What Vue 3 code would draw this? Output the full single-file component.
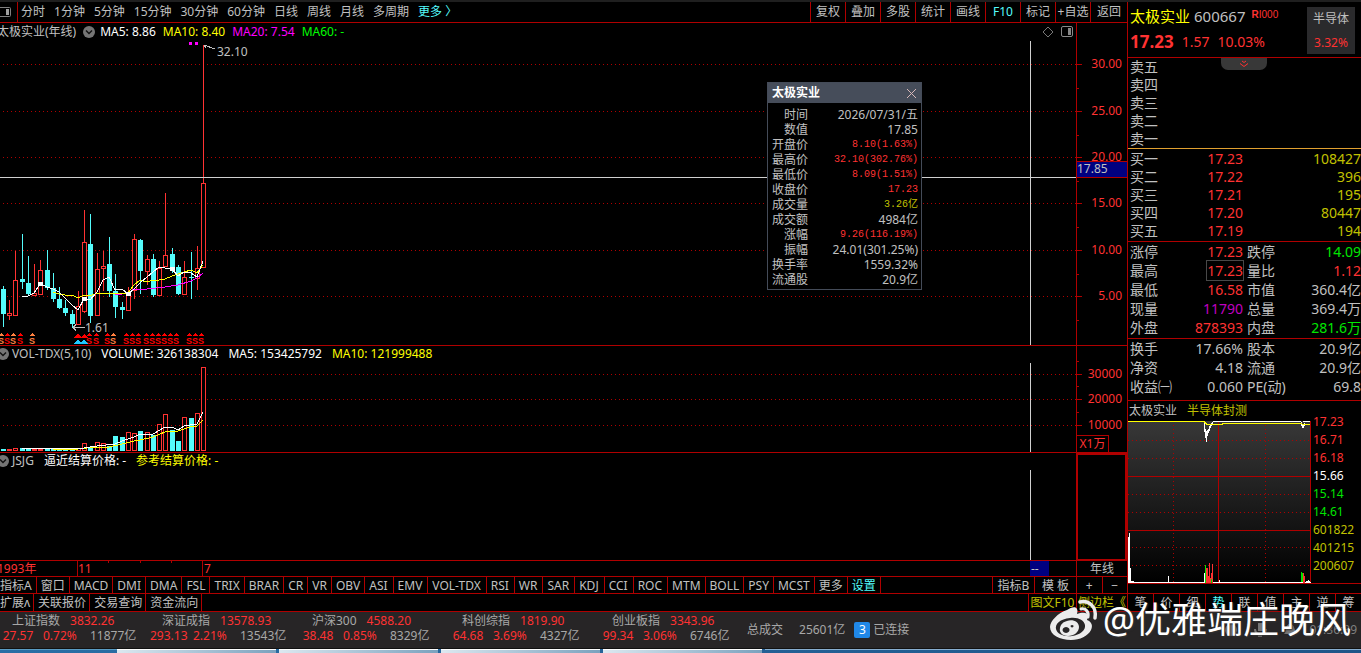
<template>
  <div class="app">
    <div class="workspace">
      <main class="left">
        <nav class="toolbar">
          <button class="panel-toggle" aria-label="panel">
            <svg width="12" height="12" viewBox="0 0 12 12">
              <rect x="-3" y="1.5" width="13.5" height="9" rx="1" fill="none" stroke="#808080" />
              <rect x="6" y="3" width="3" height="6" fill="#a0a0a0" />
            </svg>
          </button>
          <div class="periods">
            <button v-for="p in periods" :key="p">{{ p }}</button>
            <button class="cyan">更多 〉</button>
          </div>
          <div class="tools">
            <button v-for="t in tools" :key="t" :class="{ cyan: t === 'F10' }">{{ t }}</button>
          </div>
        </nav>

        <section class="pane pane-main">
          <div class="plot-col">
            <div class="pane-head">
              <span class="title">太极实业(年线)</span>
              <svg class="drop" width="12" height="12" viewBox="0 0 12 12">
                <circle cx="6" cy="6" r="6" fill="#757575" />
                <path d="M3 4.5 6 7.5 9 4.5" fill="none" stroke="#111" stroke-width="1.4" />
              </svg>
              <span class="white">MA5: 8.86</span>
              <span class="yellow">MA10: 8.40</span>
              <span class="magenta">MA20: 7.54</span>
              <span class="lime">MA60: -</span>
              <svg class="head-icons" width="32" height="12" viewBox="0 0 32 12">
                <path d="M6 1 11 6 6 11 1 6Z" fill="none" stroke="#777" />
                <rect x="19.5" y=".5" width="11" height="10" rx="1.5" fill="none" stroke="#888" />
                <rect x="26" y="2" width="3" height="7" fill="#888" />
              </svg>
            </div>
            <div class="plot">
              <svg class="canvas" height="304">
                <line v-for="y in priceGrid" :key="y" class="dots" x1="3" :y1="y + 0.5" x2="100%" :y2="y + 0.5" />
                <g v-for="(c, i) in candles" :key="i">
                  <line :x1="c[0] + 0.5" :x2="c[0] + 0.5" :y1="c[1]" :y2="c[4]" :stroke="c[5] ? RED : CYAN" />
                  <rect
                    v-if="c[5]"
                    :x="c[0] - 1.5"
                    :y="c[2] + 0.5"
                    width="4"
                    :height="Math.max(1, c[3] - c[2])"
                    fill="#000"
                    :stroke="RED"
                  />
                  <rect v-else :x="c[0] - 2" :y="c[2]" width="5" :height="c[3] - c[2]" :fill="CYAN" />
                </g>
                <polyline :points="ma20" stroke="#f0f" />
                <polyline :points="ma10" stroke="#ff0" />
                <polyline :points="ma5" stroke="#fff" />
                <rect v-for="m in marks" :key="m[0]" :x="m[0] - 2" :y="m[1] - 2" width="5" height="4" fill="#fff" />
                <rect x="189" y="1" width="3" height="3" fill="#f0f" />
                <rect x="195" y="1" width="3" height="3" fill="#f0f" />
                <path d="M204 4 215 8M204 4h3M204 4l2 3" fill="none" stroke="#c0c0c0" />
                <text x="217" y="15" fill="#c0c0c0">32.10</text>
                <path d="M73 286.500h12M73 286.500l3-3M73 286.500l3 3" fill="none" stroke="#c0c0c0" />
                <text x="85" y="291" fill="#c0c0c0">1.61</text>
                <g v-for="s in signals" :key="s[0]" :fill="s[1]">
                  <path :d="`M${s[0]} 292l3 3h-6z`" />
                  <text class="signal" :x="s[0]" y="303" text-anchor="middle">S</text>
                </g>
                <path d="M78 298l4 5h-8zM84 298l4 5h-8z" fill="#1ec8ff" />
                <path d="M78 292l4 5h-8zM84 293l4 4h-8z" fill="#f00" />
                <line x1="0" y1="136.5" x2="100%" y2="136.5" stroke="#d0d0d0" />
              </svg>
              <div class="cross-v"></div>
              <div class="popup">
                <div class="popup-title">
                  <strong>太极实业</strong>
                  <button aria-label="close">
                    <svg width="11" height="11" viewBox="0 0 11 11">
                      <path d="M1 1 10 10M10 1 1 10" stroke="#d8b8b8" />
                    </svg>
                  </button>
                </div>
                <table>
                  <tbody>
                    <tr v-for="r in quote" :key="r[0]">
                      <th>{{ r[0] }}</th>
                      <td :class="r[2]">{{ r[1] }}</td>
                    </tr>
                  </tbody>
                </table>
              </div>
            </div>
          </div>
          <div class="axis">
            <svg width="50" height="322">
              <g v-for="(y, i) in priceGrid" :key="y">
                <path :d="`M0 ${y + 18.5}h5M0 ${y + 42.5}h2`" stroke="#b00000" />
                <text x="45" :y="y + 22" text-anchor="end" fill="#ff3232">{{ 30 - i * 5 }}.00</text>
              </g>
            </svg>
            <div class="cursor-price">17.85</div>
          </div>
        </section>

        <section class="pane">
          <div class="plot-col">
            <div class="pane-head clip-left">
              <svg class="drop" width="12" height="12" viewBox="0 0 12 12">
                <circle cx="6" cy="6" r="6" fill="#757575" />
                <path d="M3 4.5 6 7.5 9 4.5" fill="none" stroke="#111" stroke-width="1.4" />
              </svg>
              <span>VOL-TDX(5,10)</span>
              <span class="white">VOLUME: 326138304</span>
              <span class="white">MA5: 153425792</span>
              <span class="yellow">MA10: 121999488</span>
            </div>
            <div class="plot">
              <svg class="canvas" height="89">
                <line v-for="y in volGrid" :key="y" class="dots" x1="3" :y1="y + 0.5" x2="100%" :y2="y + 0.5" />
                <g v-for="(c, i) in candles" :key="i">
                  <rect
                    v-if="c[5]"
                    :x="c[0] - 1.5"
                    :y="88.5 - volumes[i]"
                    width="4"
                    :height="volumes[i] - 1"
                    fill="#000"
                    :stroke="RED"
                  />
                  <rect v-else :x="c[0] - 2" :y="88 - volumes[i]" width="5" :height="volumes[i]" :fill="CYAN" />
                </g>
                <polyline :points="volMa10" stroke="#ff0" />
                <polyline :points="volMa5" stroke="#fff" />
              </svg>
              <div class="cross-v"></div>
            </div>
          </div>
          <div class="axis">
            <svg width="50" height="106">
              <g v-for="(y, i) in volGrid" :key="y">
                <path :d="`M0 ${y + 17.5}h5M0 ${y + 4.5}h2`" stroke="#b00000" />
                <text x="45" :y="y + 21" text-anchor="end" fill="#ff3232">{{ 30000 - i * 10000 }}</text>
              </g>
            </svg>
            <div class="unit">X1万</div>
          </div>
        </section>

        <section class="pane pane-last">
          <div class="plot-col">
            <div class="pane-head clip-left">
              <svg class="drop" width="12" height="12" viewBox="0 0 12 12">
                <circle cx="6" cy="6" r="6" fill="#757575" />
                <path d="M3 4.5 6 7.5 9 4.5" fill="none" stroke="#111" stroke-width="1.4" />
              </svg>
              <span>JSJG</span>
              <span class="white">逼近结算价格: -</span>
              <span class="yellow">参考结算价格: -</span>
            </div>
            <div class="plot">
              <div class="cross-v"></div>
            </div>
          </div>
          <div class="axis framed"></div>
        </section>

        <div class="time-axis">
          <div class="times">
            <svg class="canvas" height="15">
              <path d="M77.5 0v15M202.5 0v15M108.5 0v2M140.5 0v2M171.5 0v2" stroke="#b00000" />
              <g fill="#ff3232">
                <text x="-3" y="12">1993年</text>
                <text x="78" y="12">11</text>
                <text x="204" y="12">7</text>
              </g>
            </svg>
            <span class="cursor-time">--</span>
          </div>
          <button class="cycle">年线</button>
        </div>

        <div class="strip indicators">
          <div class="cells clip-left">
            <button v-for="n in indicators" :key="n" :class="{ cyan: n === '设置' }">{{ n }}</button>
          </div>
          <div class="cells lead">
            <button class="w42">指标B</button>
            <button class="w42">模 板</button>
          </div>
          <div class="zoomers">
            <button>+</button>
            <button>−</button>
          </div>
        </div>

        <div class="strip links">
          <div class="cells clip-left">
            <button v-for="n in links" :key="n">{{ n }}</button>
          </div>
          <div class="cells lead olive">
            <button class="w48">图文F10</button>
          </div>
          <div class="zoomers olive">
            <button>侧边栏《</button>
          </div>
        </div>
      </main>

      <aside class="side">
        <header class="stock">
          <div>
            <div class="stock-name">
              <span class="yellow">太极实业</span>
              <span>600667</span>
              <small><b>R</b>I000</small>
            </div>
            <div class="stock-price"><b>17.23</b><span>1.57</span><span>10.03%</span></div>
          </div>
          <div class="sector">
            <span>半导体</span>
            <span class="red">3.32%</span>
          </div>
          <button class="pull" aria-label="expand">
            <svg width="12" height="8" viewBox="0 0 12 8">
              <path d="M4 1 6 2.5 8 1M2 3.5 6 6.5 10 3.5" fill="none" stroke="#ff3232" />
            </svg>
          </button>
        </header>

        <table class="book asks">
          <tbody>
            <tr v-for="n in ['五', '四', '三', '二', '一']" :key="n">
              <th>卖{{ n }}</th>
              <td></td>
              <td></td>
            </tr>
          </tbody>
        </table>
        <table class="book bids">
          <tbody>
            <tr v-for="b in bids" :key="b[0]">
              <th>{{ b[0] }}</th>
              <td class="red">{{ b[1] }}</td>
              <td class="olive">{{ b[2] }}</td>
            </tr>
          </tbody>
        </table>
        <table v-for="(group, g) in stats" :key="g" class="stats">
          <tbody>
            <tr v-for="s in group" :key="s[0]">
              <th>{{ s[0] }}</th>
              <td :class="s[2]"><span :class="{ boxed: s[0] === '最高' }">{{ s[1] }}</span></td>
              <th>{{ s[3] }}</th>
              <td :class="s[5]">{{ s[4] }}</td>
            </tr>
          </tbody>
        </table>

        <section class="mini">
          <div class="mini-chart">
            <div class="mini-head"><span>太极实业</span><span class="olive">半导体封测</span></div>
            <svg width="183" height="162">
              <defs>
                <linearGradient id="shade" x1="0" y1="0" x2="0" y2="1">
                  <stop offset="0" stop-color="#383838" />
                  <stop offset="1" stop-color="#000" />
                </linearGradient>
              </defs>
              <rect width="183" height="162" fill="url(#shade)" />
              <path class="mini-dots" d="M0 19.5h182M0 37.5h182M0 73.5h182M0 91.5h182M0 126.5h182M0 144.5h182M45.5 0v162M137.5 0v162" />
              <path d="M0 55.5h182M0 109.5h182M90.5 0v162M182.5 0v162" stroke="#b00000" />
              <path d="M0 .5h77M85 .5h88M175 .5h7" stroke="#fff" />
              <path
                d="M76.5 0v11M77.5 8v9M78.5 10v11M79.5 9v6M80.5 8v4M81.5 5v5M82.5 4v3M83.5 2v3M84.5 1v2M173.5 1v4M174.5 3v4M175.5 4v3M176.5 2v3"
                stroke="#fff"
              />
              <polyline points="0,0.5 76,0.5 79,3.5 94,3.5 94,2.5 172,2.5 176,3.5 182,3.5" stroke="#ff0" />
              <path d="M0 161.5h183M40.5 155v6M91.5 159v2M76.5 152v9" stroke="#fff" />
              <path d="M0 162V116h1V112h1V147h1V160h3V162z" fill="#fff" />
              <path d="M78 162v-15h2v8h1v-13h1v15h1v-5h1v-9h1v19zM175 162v-10h1v3h1v7z" fill="#ff3232" />
              <path d="M77.5 162v-18M83.5 162v-4M173.5 161v-10M174.5 161v-9" stroke="#00e600" />
              <path d="M178 160.5h4M180.5 159v2" stroke="#fff" />
            </svg>
          </div>
          <div class="mini-labels">
            <span v-for="l in miniLabels" :key="l[0]" :class="l[1]">{{ l[0] }}</span>
          </div>
        </section>
        <div class="side-tabs">
          <button v-for="t in sideTabs" :key="t" :class="{ cyan: t === '势' }">{{ t }}</button>
        </div>
      </aside>
    </div>

    <footer class="status">
      <div v-for="i in indices" :key="i[0]" class="index">
        <div class="index-top"><span>{{ i[0] }}</span><span class="red">{{ i[1] }}</span></div>
        <div class="index-bottom">
          <span class="red">{{ i[2] }}</span><span class="red">{{ i[3] }}</span><span>{{ i[4] }}</span>
        </div>
      </div>
      <span class="total">总成交</span>
      <span class="amount">25601亿</span>
      <span class="badge">3</span>
      <span>已连接</span>
      <svg class="tray" width="80" height="18" viewBox="0 0 80 18" fill="#777">
        <circle cx="10" cy="9" r="6" />
        <path d="M37 2h5v8h-5zM33 8h2c0 6 9 6 9 0h2c0 4-2 5-5 6v2h-4v-2c-3-1-4-3-4-6z" />
        <path d="M63 13c3-3 1-10 6-10s4 7 7 10z" />
      </svg>
      <span class="clock">01:36:39</span>
    </footer>
    <div class="taskbar">
      <i class="start"></i>
      <i v-for="n in 4" :key="n" class="task"></i>
      <i class="desk"></i>
    </div>

    <div class="watermark">
      <svg width="50" height="44" viewBox="0 0 50 44">
        <path
          fill="#ececec"
          fill-rule="evenodd"
          d="M18 12c4-3 9-4 10-1 1 2 0 4 0 5 5-2 11-2 11 2 0 2-1 3-1 4 5 2 6 6 4 10-3 6-11 10-20 10C11 42 1 37 1 29c0-6 8-14 17-17zM21 20C11 21 6 26 7 31c1 5 8 8 16 7s14-6 13-11-7-8-15-7z"
        />
        <path fill="#ececec" fill-rule="evenodd" d="M18 23c6-2 12 1 12 6s-5 9-11 9-9-4-8-8 3-6 7-7zm-1 6a3.5 3 0 1 0 .1 0zM23 27a1.5 1.2 0 1 0 .1 0z" />
        <path d="M32 11c5-1 8 3 7 8" fill="none" stroke="#ececec" stroke-width="3" stroke-linecap="round" />
        <path d="M31 4c9-2 17 5 15 16" fill="none" stroke="#ececec" stroke-width="3.5" stroke-linecap="round" />
      </svg>
      <span>@优雅端庄晚风</span>
    </div>
  </div>
</template>

<script setup>
const RED = "#ff3232";
const CYAN = "#54fcfc";

const periods = ["分时", "1分钟", "5分钟", "15分钟", "30分钟", "60分钟", "日线", "周线", "月线", "多周期"];
const tools = ["复权", "叠加", "多股", "统计", "画线", "F10", "标记", "+自选", "返回"];
const indicators = [
  "指标A", "窗口", "MACD", "DMI", "DMA", "FSL", "TRIX", "BRAR", "CR", "VR", "OBV", "ASI", "EMV",
  "VOL-TDX", "RSI", "WR", "SAR", "KDJ", "CCI", "ROC", "MTM", "BOLL", "PSY", "MCST", "更多", "设置",
];
const links = ["扩展ʌ", "关联报价", "交易查询", "资金流向"];
const sideTabs = ["笔", "价", "细", "势", "联", "值", "主", "逆", "筹"];

const priceGrid = [23, 70, 116, 162, 209, 255];
const volGrid = [11, 36, 62];

// x, high, body top, body bottom, low, rising
const candles = [
  [3, 245, 248, 273, 286, 0],
  [9, 259, 272, 274, 279, 1],
  [15, 210, 239, 274, 275, 1],
  [22, 193, 238, 241, 248, 0],
  [28, 215, 242, 253, 255, 0],
  [34, 223, 252, 254, 255, 1],
  [40, 219, 229, 253, 254, 1],
  [47, 209, 229, 247, 249, 0],
  [53, 232, 247, 258, 261, 0],
  [59, 246, 258, 267, 268, 0],
  [65, 259, 267, 272, 275, 0],
  [72, 269, 273, 283, 287, 0],
  [78, 250, 265, 283, 284, 1],
  [84, 169, 201, 270, 272, 1],
  [90, 173, 203, 275, 282, 0],
  [97, 212, 228, 274, 275, 1],
  [103, 210, 225, 227, 250, 1],
  [109, 196, 223, 250, 256, 0],
  [115, 233, 250, 266, 277, 0],
  [122, 261, 266, 269, 278, 0],
  [128, 246, 253, 269, 270, 1],
  [134, 193, 198, 249, 258, 1],
  [140, 198, 199, 230, 253, 0],
  [147, 214, 218, 230, 244, 1],
  [153, 213, 218, 254, 256, 0],
  [159, 220, 227, 254, 255, 1],
  [165, 152, 214, 225, 226, 1],
  [172, 207, 213, 229, 232, 0],
  [178, 224, 226, 253, 254, 0],
  [184, 220, 236, 253, 254, 1],
  [191, 211, 236, 237, 258, 0],
  [197, 205, 227, 237, 249, 1],
  [203, 4, 142, 226, 227, 1],
];
const volumes = [
  2, 2, 3, 3, 3, 2, 2, 2, 2, 1, 2, 1, 3, 8, 4, 9, 8, 5, 15, 14, 19, 18, 20, 19, 16, 27, 37, 21, 10,
  34, 33, 38, 84,
];

const ma5 =
  "22,255 28,255 34,252 40,243 47,246 53,248 59,251 65,257 72,264 78,269 84,258 90,259 97,251 103,239 109,236 115,249 122,248 128,253 134,248 140,242 147,236 153,231 159,226 165,227 172,228 178,235 184,231 191,232 197,236 203,220";
const ma10 =
  "53,251 59,253 65,254 72,254 78,257 84,254 90,255 97,252 115,253 128,252 134,244 140,239 147,241 153,239 159,239 165,238 172,235 178,233 184,231 191,229 197,232 203,224";
const ma20 = "115,253 122,253 128,252 134,248 147,248 165,246 178,244 191,240 197,237 203,232";
const volMa5 =
  "22,86 40,85 84,85 97,83 115,81 122,78 134,74 140,71 153,71 165,64 172,64 178,67 184,63 197,61 203,49";
const volMa10 =
  "53,86 78,86 97,84 109,84 122,81 134,78 140,77 153,74 165,69 178,68 190,64 197,63 203,57";
const marks = [[40, 243], [84, 258], [128, 253], [172, 228]];

const orange = [1, 13, 32, 113];
const signals = [1, 7, 13, 20, 32, 89, 96, 107, 113, 126, 132, 138, 146, 152, 158, 164, 170, 176, 189, 195, 201]
  .map((x) => [x, orange.includes(x) ? "#ff8040" : "#ff0000"]);

const quote = [
  ["时间", "2026/07/31/五", ""],
  ["数值", "17.85", ""],
  ["开盘价", "8.10(1.63%)", "mono red"],
  ["最高价", "32.10(302.76%)", "mono red"],
  ["最低价", "8.09(1.51%)", "mono red"],
  ["收盘价", "17.23", "mono red"],
  ["成交量", "3.26亿", "mono olive"],
  ["成交额", "4984亿", ""],
  ["涨幅", "9.26(116.19%)", "mono red"],
  ["振幅", "24.01(301.25%)", ""],
  ["换手率", "1559.32%", ""],
  ["流通股", "20.9亿", ""],
];

const bids = [
  ["买一", "17.23", "108427"],
  ["买二", "17.22", "396"],
  ["买三", "17.21", "195"],
  ["买四", "17.20", "80447"],
  ["买五", "17.19", "194"],
];

const stats = [
  [
    ["涨停", "17.23", "red", "跌停", "14.09", "green"],
    ["最高", "17.23", "red", "量比", "1.12", "red"],
    ["最低", "16.58", "red", "市值", "360.4亿", ""],
    ["现量", "11790", "purple", "总量", "369.4万", ""],
    ["外盘", "878393", "red", "内盘", "281.6万", "green"],
  ],
  [
    ["换手", "17.66%", "", "股本", "20.9亿", ""],
    ["净资", "4.18", "", "流通", "20.9亿", ""],
    ["收益㈠", "0.060", "", "PE(动)", "69.8", ""],
  ],
];

const miniLabels = [
  ["17.23", "red"],
  ["16.71", "red"],
  ["16.18", "red"],
  ["15.66", "white"],
  ["15.14", "green"],
  ["14.61", "green"],
  ["601822", "olive"],
  ["401215", "olive"],
  ["200607", "olive"],
];

const indices = [
  ["上证指数", "3832.26", "27.57", "0.72%", "11877亿"],
  ["深证成指", "13578.93", "293.13", "2.21%", "13543亿"],
  ["沪深300", "4588.20", "38.48", "0.85%", "8329亿"],
  ["科创综指", "1819.90", "64.68", "3.69%", "4327亿"],
  ["创业板指", "3343.96", "99.34", "3.06%", "6746亿"],
];
</script>

<style>
body {
  background: #000;
}
</style>

<style scoped>
.app {
  position: relative;
  display: flex;
  flex-direction: column;
  min-height: 100vh;
  box-sizing: border-box;
  border-top: 2px solid #1f1f1f;
  overflow: hidden;
  background: #000;
  color: #c0c0c0;
  font: 12px/16px "Noto Sans", "Noto Sans CJK SC", sans-serif;
  white-space: nowrap;
}
button {
  margin: 0;
  padding: 0;
  border: 0;
  background: none;
  color: inherit;
  font: inherit;
  white-space: nowrap;
  cursor: pointer;
}
table {
  border-collapse: collapse;
}
th {
  font-weight: normal;
}
svg {
  display: block;
  flex: none;
}
.white { color: #fff; }
.yellow { color: #ff0; }
.magenta { color: #f0f; }
.lime { color: #0f0; }
.green { color: #00e600; }
.red { color: #ff3232; }
.cyan { color: #54fcfc; }
.olive { color: #c0c000; }
.purple { color: #c000c0; }

.workspace {
  flex: 1;
  display: flex;
}
.left {
  flex: 1;
  min-width: 0;
  display: flex;
  flex-direction: column;
}

.toolbar {
  display: flex;
  height: 20px;
  border-bottom: 1px solid #b00000;
}
.panel-toggle {
  width: 18px;
  border-right: 1px solid #b00000;
}
.periods {
  flex: 1;
  display: flex;
  gap: 9px;
  padding-left: 3px;
}
.tools {
  display: flex;
}
.tools button {
  width: 35px;
  border-left: 1px solid #b00000;
  overflow: hidden;
}
.tools button:last-child {
  width: 37px;
}

.pane {
  display: flex;
  border-bottom: 1px solid #b00000;
}
.pane-last {
  flex: 1;
}
.plot-col {
  flex: 1;
  min-width: 0;
  display: flex;
  flex-direction: column;
}
.pane-main .plot-col {
  padding-top: 1px;
}
.pane-head {
  display: flex;
  align-items: center;
  gap: 7px;
  height: 15px;
  padding-bottom: 2px;
}
.pane-head .title,
.clip-left {
  margin-left: -3px;
}
.pane-head .drop {
  margin-right: -2px;
}
.pane-head.clip-left {
  gap: 10px;
}
.clip-left .drop {
  margin-right: -7px;
}
.head-icons {
  margin-left: auto;
  margin-right: 2px;
}
.plot {
  position: relative;
  flex: 1;
}
.canvas {
  width: 100%;
  shape-rendering: crispEdges;
}
.canvas polyline,
.mini-chart polyline {
  fill: none;
}
.dots {
  stroke: #b00000;
  stroke-dasharray: 1 3;
}
.signal {
  font: bold 9px "Liberation Sans", sans-serif;
}
.cross-v {
  position: absolute;
  top: 0;
  bottom: 0;
  right: 45px;
  width: 1px;
  background: #d0d0d0;
}
.axis {
  position: relative;
  width: 50px;
  border-left: 1px solid #b00000;
}
.framed {
  width: 47px;
  border: 2px solid #b00000;
  border-bottom-width: 1px;
}
.cursor-price {
  position: absolute;
  top: 138px;
  left: 0;
  right: 0;
  border: solid #b00000;
  border-width: 1px 0;
  background: #000080;
  padding-bottom: 1px;
  line-height: 14px;
}
.unit {
  position: absolute;
  left: 0;
  bottom: 0;
  width: 31px;
  border: solid #b00000;
  border-width: 1px 1px 0 0;
  color: #ff3232;
  text-align: center;
}

.popup {
  position: absolute;
  left: 767px;
  top: 41px;
  width: 153px;
  border: 1px solid #444b58;
  background: #000;
}
.popup-title {
  display: flex;
  align-items: center;
  justify-content: space-between;
  height: 20px;
  padding: 0 4px;
  background: #464d5a;
  color: #fff;
}
.popup table {
  width: 100%;
  margin: 4px 0 2px;
}
.popup th,
.popup td {
  padding: 0;
  height: 15px;
  line-height: 15px;
  text-align: right;
}
.popup th {
  width: 40px;
}
.popup td {
  padding-right: 3px;
}
.popup .mono {
  font-family: "Liberation Mono", "Noto Sans CJK SC", monospace;
  font-size: 10px;
}

.time-axis,
.strip {
  display: flex;
  border-bottom: 1px solid #b00000;
}
.time-axis {
  height: 15px;
}
.times {
  position: relative;
  flex: 1;
}
.cursor-time {
  position: absolute;
  top: 0;
  right: 27px;
  width: 18px;
  padding-left: 1px;
  background: #000080;
  line-height: 15px;
}
.cycle,
.zoomers {
  width: 51px;
  border-left: 1px solid #b00000;
  line-height: 15px;
}
.indicators {
  height: 16px;
}
.indicators button {
  padding-top: 2px;
  line-height: 14px;
}
.links {
  height: 17px;
}
.cells {
  display: flex;
}
.cells button {
  padding-left: 4px;
  padding-right: 4px;
  border-right: 1px solid #b00000;
}
.indicators .cells button:nth-child(n + 12):nth-child(-n + 20) {
  padding-right: 5px;
}
.links .cells button {
  padding-left: 4px;
  padding-right: 3px;
}
.cells button:first-child {
  padding-left: 3px;
}
.cells.lead {
  margin-left: auto;
}
.cells.lead button {
  padding-left: 0;
  padding-right: 0;
  border-right: 0;
  border-left: 1px solid #b00000;
}
.w42 {
  width: 42px;
}
.w48 {
  width: 48px;
}
.zoomers {
  box-sizing: border-box;
  display: flex;
}
.zoomers button {
  flex: 1;
}
.zoomers button + button {
  border-left: 1px solid #b00000;
}

.side {
  width: 233px;
  border-left: 1px solid #b00000;
  display: flex;
  flex-direction: column;
}
.stock {
  position: relative;
  display: flex;
  justify-content: space-between;
  height: 55px;
  padding: 0 6px 0 2px;
  border-bottom: 1px solid #b00000;
}
.stock-name {
  display: flex;
  gap: 4px;
  padding-top: 4px;
  font-size: 15px;
  line-height: 20px;
}
.stock-name small {
  margin-left: 2px;
  color: #ff3232;
  font: 10px/18px "Liberation Sans", sans-serif;
}
.stock-price {
  display: flex;
  gap: 8px;
  padding-top: 5px;
  color: #ff3232;
  font-size: 14px;
  line-height: 21px;
}
.stock-price b {
  font-size: 17px;
}
.sector {
  display: flex;
  flex-direction: column;
  justify-content: space-between;
  box-sizing: border-box;
  width: 48px;
  height: 47px;
  margin-top: 5px;
  padding: 4px 0 3px;
  background: #2a2a2c;
  text-align: center;
}
.pull {
  position: absolute;
  left: 93px;
  top: 56px;
  width: 46px;
  height: 12px;
  border-radius: 0 0 7px 7px;
  background: #383838;
}
.pull svg {
  margin: 0 auto;
}
.book,
.stats {
  width: 100%;
  table-layout: fixed;
  border-bottom: 1px solid #b00000;
  border-collapse: separate;
  border-spacing: 0;
  font-size: 14px;
}
.book th,
.book td {
  height: 18px;
  line-height: 18px;
  padding: 0;
}
.stats th,
.stats td {
  height: 19px;
  line-height: 19px;
  padding: 0;
}
.book th,
.stats th {
  width: 41px;
  padding-left: 2px;
  text-align: left;
}
.book td,
.stats td {
  text-align: right;
}
.book td:nth-child(2),
.stats td:nth-child(2) {
  width: 72px;
}
.stats th:nth-child(3) {
  padding-left: 4px;
}
.asks {
  border-bottom-color: #e0a030;
}
.bids {
  padding: 1px 0;
}
.stats {
  padding-bottom: 1px;
}
.stats + .stats {
  padding-bottom: 4px;
}
.boxed {
  outline: 1px solid #484848;
}

.mini {
  flex: 1;
  display: flex;
  align-items: flex-start;
}
.mini-chart {
  border-bottom: 1px solid #b00000;
}
.mini-head {
  display: flex;
  gap: 10px;
  height: 20px;
  padding-left: 1px;
  line-height: 19px;
}
.mini-dots {
  stroke: #b00000;
  stroke-dasharray: 1 3;
}
.mini-chart svg {
  shape-rendering: crispEdges;
}
.mini-labels {
  flex: 1;
  display: flex;
  flex-direction: column;
  padding: 12px 0 0 2px;
  height: 170px;
  border-bottom: 1px solid #b00000;
  line-height: 18px;
}
.side-tabs {
  display: flex;
  height: 17px;
  border: solid #b00000;
  border-width: 1px 0;
}
.side-tabs button {
  flex: 1;
}
.side-tabs button + button {
  border-left: 1px solid #b00000;
}

.status {
  display: flex;
  align-items: center;
  height: 36px;
  background: #272526;
  color: #a8a8a8;
}
.index {
  align-self: flex-start;
  width: 150px;
  padding-top: 1px;
  line-height: 15px;
}
.index-top {
  display: flex;
  gap: 10px;
  padding-left: 12px;
}
.index-bottom {
  display: flex;
}
.index-bottom span:nth-child(1) {
  width: 36px;
  text-align: center;
}
.index-bottom span:nth-child(2) {
  width: 54px;
  box-sizing: border-box;
  padding-left: 7px;
}
.total {
  margin: 0 16px 0 -3px;
}
.badge {
  width: 16px;
  margin: 0 3px 0 9px;
  border-radius: 2px;
  background: #2088e8;
  color: #fff;
  text-align: center;
}
.tray {
  margin-left: auto;
}
.clock {
  margin: 0 4px 0 8px;
  color: #808080;
}
.taskbar {
  display: flex;
  height: 5px;
  background: linear-gradient(90deg, #2a6ea5, #1f5588);
  border-top: 1px solid #111;
  box-sizing: border-box;
}
.start {
  width: 117px;
  border-top: 1px solid #5a9cc4;
}
.task {
  width: 159px;
  margin-right: 3px;
  border-top: 1px solid #fff;
  background: linear-gradient(90deg, #dce8f0, #7ba2be);
}
.desk {
  flex: 1;
  border-top: 1px solid #88aed0;
}

.watermark {
  position: absolute;
  right: 10px;
  bottom: 10px;
  display: flex;
  align-items: center;
  gap: 4px;
  color: #fff;
  font-size: 36px;
  line-height: 46px;
  text-shadow: 1px 1px 2px #333;
}
</style>
